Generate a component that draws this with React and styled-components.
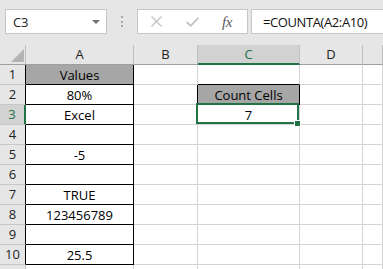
import React from "react";
import styled, { createGlobalStyle } from "styled-components";

const C = {
  bar: "#e6e6e6",
  head: "#e6e6e6",
  headSel: "#d2d2d2",
  headLine: "#bfbfbf",
  headBottom: "#9f9f9f",
  rowLine: "#c8c8c8",
  grid: "#d4d4d4",
  black: "#000000",
  green: "#217346",
  fill: "#a6a6a6",
  boxBorder: "#c6c6c6",
};

const Global = createGlobalStyle`
  html, body { margin: 0; padding: 0; background: #fff; overflow: hidden; }
  * { box-sizing: border-box; }
`;

const Window = styled.div`
  width: 383px;
  height: 269px;
  overflow: hidden;
  background: #fff;
  font-family: "Open Sans", "Liberation Sans", sans-serif;
`;

const FormulaBar = styled.div`
  height: 45px;
  background: ${C.bar};
  display: flex;
  align-items: flex-start;
  padding: 9px 0 0 5px;
`;

const NameBox = styled.div`
  width: 102px;
  height: 25px;
  background: #fff;
  border: 1px solid ${C.boxBorder};
  display: flex;
  align-items: center;
  justify-content: space-between;
  padding: 0 6px 0 7px;
  font-size: 13px;
  letter-spacing: -0.2px;
  color: #222;
`;

const DropArrow = styled.span`
  width: 0;
  height: 0;
  border-left: 4px solid transparent;
  border-right: 4px solid transparent;
  border-top: 4px solid #707070;
  margin-top: 1px;
`;

const Grip = styled.div`
  margin-left: 14px;
  margin-top: 7px;
  display: flex;
  flex-direction: column;
  gap: 2.5px;
`;

const Dot = styled.span`
  width: 2px;
  height: 2px;
  background: #a8a8a8;
`;

const FxBox = styled.div`
  margin-left: 14px;
  width: 111px;
  height: 25px;
  background: #fff;
  border: 1px solid ${C.boxBorder};
  display: flex;
  align-items: center;
  padding-left: 13px;
`;

const IconSlot = styled.span`
  display: flex;
  margin-right: ${(p) => p.$gap}px;
`;

const FxText = styled.span`
  font-family: "Liberation Serif", "DejaVu Serif", serif;
  font-style: italic;
  font-size: 15px;
  color: #5a5a5a;
  letter-spacing: -0.3px;
  line-height: 15px;
  margin-top: 1px;
`;

const FormulaInput = styled.div`
  margin-left: 3px;
  flex: 1;
  margin-right: -4px;
  height: 25px;
  background: #fff;
  border: 1px solid ${C.boxBorder};
  display: flex;
  align-items: center;
  padding-left: 11px;
  font-size: 13px;
  letter-spacing: -0.4px;
  color: #111;
`;

const Row = styled.div`
  display: grid;
  grid-template-columns: 26px 108px 64px 102px 63px 1fr;
  grid-template-rows: 20px;
  height: 20px;
`;

const HeadCell = styled.div`
  height: 20px;
  background: ${(p) => (p.$sel ? C.headSel : C.head)};
  border-right: 1px solid ${C.headLine};
  border-bottom: ${(p) => (p.$sel ? `2px solid ${C.green}` : `1px solid ${C.headBottom}`)};
  text-align: center;
  font-size: 13px;
  line-height: 19px;
  color: ${(p) => (p.$sel ? C.green : "#222")};
`;

const Corner = styled.div`
  height: 20px;
  background: ${C.head};
  border-right: 1px solid ${C.headLine};
  border-bottom: 1px solid ${C.headBottom};
  display: flex;
  align-items: flex-end;
  justify-content: flex-end;
  padding: 0 1px 2px 0;
`;

const CornerTri = styled.span`
  width: 13px;
  height: 13px;
  background: #b4b4b4;
  clip-path: polygon(100% 0, 100% 100%, 0 100%);
`;

const RowHead = styled.div`
  height: 20px;
  background: ${(p) => (p.$sel ? C.headSel : C.head)};
  border-right: ${(p) => p.$rw}px solid ${(p) => p.$right};
  border-bottom: 1px solid ${C.rowLine};
  text-align: center;
  font-size: 13px;
  line-height: 19px;
  color: ${(p) => (p.$sel ? C.green : "#222")};
`;

const Cell = styled.div`
  position: relative;
  height: 20px;
  padding-top: 1px;
  background: ${(p) => p.$bg || "#fff"};
  border-right: 1px solid ${(p) => p.$right || C.grid};
  border-bottom: 1px solid ${(p) => p.$bottom || C.grid};
  text-align: center;
  font-size: 13px;
  line-height: 19px;
  color: #000;
  white-space: nowrap;
`;

const Selection = styled.span`
  position: absolute;
  top: -2px;
  left: -2px;
  right: 0;
  bottom: 0;
  border: 2px solid ${C.green};
  z-index: 2;
  pointer-events: none;
`;

const FillHandle = styled.span`
  position: absolute;
  right: -2px;
  bottom: -3px;
  width: 7px;
  height: 7px;
  background: ${C.green};
  border: 1px solid #fff;
  z-index: 3;
`;

const rows = [
  { n: 1, a: "Values", aFill: true, c: "", cBottom: C.black },
  { n: 2, a: "80%", c: "Count Cells", cFill: true, bRight: C.black, cRight: C.black, cBottom: C.black },
  { n: 3, a: "Excel", c: "7", sel: true },
  { n: 4, a: "" },
  { n: 5, a: "-5" },
  { n: 6, a: "" },
  { n: 7, a: "TRUE" },
  { n: 8, a: "123456789" },
  { n: 9, a: "" },
  { n: 10, a: "25.5" },
  { n: 11, a: "", plain: true, hideNum: true },
];

const XIcon = () => (
  <svg width="11" height="11" viewBox="0 0 11 11">
    <path d="M0.5 0.5 L10.5 10.5 M10.5 0.5 L0.5 10.5" stroke="#c2c2c2" strokeWidth="1.3" fill="none" />
  </svg>
);

const CheckIcon = () => (
  <svg width="13" height="10" viewBox="0 0 13 10">
    <path d="M0.8 5 L4.6 8.8 L12.4 0.8" stroke="#c2c2c2" strokeWidth="1.8" fill="none" />
  </svg>
);

export default function App() {
  return (
    <Window>
      <Global />
      <FormulaBar>
        <NameBox>
          <span>C3</span>
          <DropArrow />
        </NameBox>
        <Grip>
          <Dot />
          <Dot />
          <Dot />
        </Grip>
        <FxBox>
          <IconSlot $gap={24}>
            <XIcon />
          </IconSlot>
          <IconSlot $gap={23}>
            <CheckIcon />
          </IconSlot>
          <FxText>fx</FxText>
        </FxBox>
        <FormulaInput>=COUNTA(A2:A10)</FormulaInput>
      </FormulaBar>

      <Row>
        <Corner>
          <CornerTri />
        </Corner>
        <HeadCell>A</HeadCell>
        <HeadCell>B</HeadCell>
        <HeadCell $sel>C</HeadCell>
        <HeadCell>D</HeadCell>
        <HeadCell />
      </Row>

      {rows.map((r) => (
        <Row key={r.n}>
          <RowHead
            $sel={r.sel}
            $rw={r.sel ? 2 : 1}
            $right={r.sel ? C.green : r.plain ? C.headLine : C.black}
          >
            {r.hideNum ? null : r.n}
          </RowHead>
          <Cell
            $bg={r.aFill ? C.fill : undefined}
            $right={r.plain ? C.grid : C.black}
            $bottom={r.plain ? C.grid : C.black}
          >
            {r.a}
          </Cell>
          <Cell $right={r.bRight} />
          <Cell $bg={r.cFill ? C.fill : undefined} $right={r.cRight} $bottom={r.cBottom}>
            {r.c}
            {r.sel && (
              <>
                <Selection />
                <FillHandle />
              </>
            )}
          </Cell>
          <Cell />
          <Cell />
        </Row>
      ))}
    </Window>
  );
}
